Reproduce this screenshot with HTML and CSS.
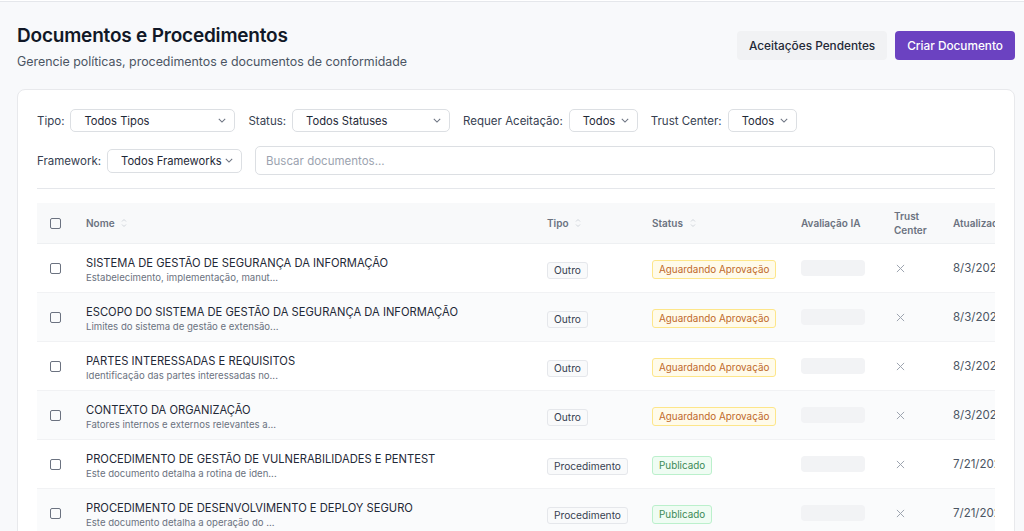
FILE: index.html
```html
<!DOCTYPE html>
<html lang="pt-BR">
<head>
    <meta charset="UTF-8">
    <meta name="viewport" content="width=device-width, initial-scale=1.0">
    <title>Documentos e Procedimentos</title>
    <link rel="stylesheet" href="styles.css">
</head>
<body>
    <div class="topline"></div>

    <div class="page">
        <div class="page-header">
            <div>
                <h1>Documentos e Procedimentos</h1>
                <p class="subtitle">Gerencie políticas, procedimentos e documentos de conformidade</p>
            </div>
            <div class="header-actions">
                <button class="btn btn-light">Aceitações Pendentes</button>
                <button class="btn btn-primary">Criar Documento</button>
            </div>
        </div>

        <div class="card">
            <div class="filters">
                <div class="filter-row">
                    <label>Tipo:</label>
                    <div class="select w-tipo"><span>Todos Tipos</span><svg viewBox="0 0 10 6"><path d="M1 1l4 4 4-4"/></svg></div>
                    <label>Status:</label>
                    <div class="select w-status"><span>Todos Statuses</span><svg viewBox="0 0 10 6"><path d="M1 1l4 4 4-4"/></svg></div>
                    <label>Requer Aceitação:</label>
                    <div class="select w-small"><span>Todos</span><svg viewBox="0 0 10 6"><path d="M1 1l4 4 4-4"/></svg></div>
                    <label>Trust Center:</label>
                    <div class="select w-small"><span>Todos</span><svg viewBox="0 0 10 6"><path d="M1 1l4 4 4-4"/></svg></div>
                </div>
                <div class="filter-row">
                    <label>Framework:</label>
                    <div class="select w-framework"><span>Todos Frameworks</span><svg viewBox="0 0 10 6"><path d="M1 1l4 4 4-4"/></svg></div>
                    <input type="text" class="search" placeholder="Buscar documentos...">
                </div>
            </div>

            <div class="table-wrap">
                <table class="doc-table">
                    <colgroup>
                        <col style="width:37px">
                        <col style="width:461px">
                        <col style="width:105px">
                        <col style="width:149px">
                        <col style="width:93px">
                        <col style="width:59px">
                        <col style="width:120px">
                    </colgroup>
                    <thead>
                        <tr>
                            <th class="cb-cell"><span class="checkbox"></span></th>
                            <th>Nome <svg class="sort" viewBox="0 0 6 10"><path d="M1 3.5l2-2 2 2M1 6.5l2 2 2-2"/></svg></th>
                            <th>Tipo <svg class="sort" viewBox="0 0 6 10"><path d="M1 3.5l2-2 2 2M1 6.5l2 2 2-2"/></svg></th>
                            <th>Status <svg class="sort" viewBox="0 0 6 10"><path d="M1 3.5l2-2 2 2M1 6.5l2 2 2-2"/></svg></th>
                            <th>Avaliação IA</th>
                            <th>Trust Center</th>
                            <th>Atualizado em</th>
                        </tr>
                    </thead>
                    <tbody>
                        <tr>
                            <td class="cb-cell"><span class="checkbox"></span></td>
                            <td><div class="doc-text"><div class="doc-name">SISTEMA DE GESTÃO DE SEGURANÇA DA INFORMAÇÃO</div><div class="doc-desc">Estabelecimento, implementação, manut...</div></div></td>
                            <td><span class="tag">Outro</span></td>
                            <td><span class="status pending">Aguardando Aprovação</span></td>
                            <td><span class="ai-placeholder"></span></td>
                            <td><svg class="cross" viewBox="0 0 10 10"><path d="M1 1l8 8M9 1l-8 8"/></svg></td>
                            <td class="date">8/3/2026</td>
                        </tr>
                        <tr>
                            <td class="cb-cell"><span class="checkbox"></span></td>
                            <td><div class="doc-text"><div class="doc-name">ESCOPO DO SISTEMA DE GESTÃO DA SEGURANÇA DA INFORMAÇÃO</div><div class="doc-desc">Limites do sistema de gestão e extensão...</div></div></td>
                            <td><span class="tag">Outro</span></td>
                            <td><span class="status pending">Aguardando Aprovação</span></td>
                            <td><span class="ai-placeholder"></span></td>
                            <td><svg class="cross" viewBox="0 0 10 10"><path d="M1 1l8 8M9 1l-8 8"/></svg></td>
                            <td class="date">8/3/2026</td>
                        </tr>
                        <tr>
                            <td class="cb-cell"><span class="checkbox"></span></td>
                            <td><div class="doc-text"><div class="doc-name">PARTES INTERESSADAS E REQUISITOS</div><div class="doc-desc">Identificação das partes interessadas no...</div></div></td>
                            <td><span class="tag">Outro</span></td>
                            <td><span class="status pending">Aguardando Aprovação</span></td>
                            <td><span class="ai-placeholder"></span></td>
                            <td><svg class="cross" viewBox="0 0 10 10"><path d="M1 1l8 8M9 1l-8 8"/></svg></td>
                            <td class="date">8/3/2026</td>
                        </tr>
                        <tr>
                            <td class="cb-cell"><span class="checkbox"></span></td>
                            <td><div class="doc-text"><div class="doc-name">CONTEXTO DA ORGANIZAÇÃO</div><div class="doc-desc">Fatores internos e externos relevantes a...</div></div></td>
                            <td><span class="tag">Outro</span></td>
                            <td><span class="status pending">Aguardando Aprovação</span></td>
                            <td><span class="ai-placeholder"></span></td>
                            <td><svg class="cross" viewBox="0 0 10 10"><path d="M1 1l8 8M9 1l-8 8"/></svg></td>
                            <td class="date">8/3/2026</td>
                        </tr>
                        <tr>
                            <td class="cb-cell"><span class="checkbox"></span></td>
                            <td><div class="doc-text"><div class="doc-name">PROCEDIMENTO DE GESTÃO DE VULNERABILIDADES E PENTEST</div><div class="doc-desc">Este documento detalha a rotina de iden...</div></div></td>
                            <td><span class="tag">Procedimento</span></td>
                            <td><span class="status published">Publicado</span></td>
                            <td><span class="ai-placeholder"></span></td>
                            <td><svg class="cross" viewBox="0 0 10 10"><path d="M1 1l8 8M9 1l-8 8"/></svg></td>
                            <td class="date">7/21/2025</td>
                        </tr>
                        <tr>
                            <td class="cb-cell"><span class="checkbox"></span></td>
                            <td><div class="doc-text"><div class="doc-name">PROCEDIMENTO DE DESENVOLVIMENTO E DEPLOY SEGURO</div><div class="doc-desc">Este documento detalha a operação do ...</div></div></td>
                            <td><span class="tag">Procedimento</span></td>
                            <td><span class="status published">Publicado</span></td>
                            <td><span class="ai-placeholder"></span></td>
                            <td><svg class="cross" viewBox="0 0 10 10"><path d="M1 1l8 8M9 1l-8 8"/></svg></td>
                            <td class="date">7/21/2025</td>
                        </tr>
                    </tbody>
                </table>
            </div>
        </div>
    </div>
</body>
</html>
```

FILE: styles.css
```css
/* base */
body {
    margin: 0;
    font-family: Inter, 'Noto Sans', sans-serif;
    background-color: #f8f9fb;
    color: #1f2937;
    overflow: hidden;
}
.topline {
    height: 1px;
    background-color: #ffffff;
    border-bottom: 1px solid #e5e7eb;
}
.page {
    padding: 21px 9px 0 17px;
}

/* header */
.page-header {
    display: flex;
    justify-content: space-between;
    align-items: center;
    margin-bottom: 17px;
}
h1 {
    margin: 0;
    font-size: 19px;
    font-weight: 600;
    color: #111827;
    letter-spacing: -0.2px;
    line-height: 26px;
}
.subtitle {
    margin: 3px 0 0;
    font-size: 12.4px;
    color: #4b5563;
    line-height: 20px;
}
.header-actions {
    display: flex;
    gap: 8px;
    margin-top: -4px;
}
.btn {
    font-family: inherit;
    font-size: 11.8px;
    font-weight: 500;
    height: 29px;
    padding: 0 12px;
    border: none;
    border-radius: 4px;
    cursor: pointer;
}
.btn-light {
    background-color: #f1f2f4;
    color: #1f2937;
}
.btn-primary {
    background-color: #6b42c1;
    color: #ffffff;
}

/* card */
.card {
    background-color: #ffffff;
    border: 1px solid #e8e9ec;
    border-radius: 8px;
    padding: 19px 19px 0 19px;
    height: 460px;
}
.filters {
    padding-bottom: 13px;
    border-bottom: 1px solid #e5e7eb;
    margin-bottom: 14px;
}
.filter-row {
    display: flex;
    align-items: center;
    margin-bottom: 14px;
}
.filter-row:last-child {
    margin-bottom: 0;
}
.filter-row label {
    font-size: 11.5px;
    color: #374151;
    margin-right: 6px;
}
.select {
    display: flex;
    align-items: center;
    justify-content: space-between;
    box-sizing: border-box;
    height: 23px;
    padding: 0 8px 0 13px;
    border: 1px solid #dcdfe3;
    border-radius: 5px;
    font-size: 11.2px;
    color: #1f2937;
    margin-right: 13px;
    white-space: nowrap;
}
.select svg {
    width: 8px;
    height: 5px;
    fill: none;
    stroke: #6b7280;
    stroke-width: 1.3;
}
.w-tipo { width: 165px; }
.w-status { width: 158px; }
.w-small { width: 69px; }
.w-framework { width: 135px; height: 24px; }
.search {
    flex: 1;
    height: 29px;
    box-sizing: border-box;
    border: 1px solid #dcdfe3;
    border-radius: 5px;
    padding: 0 10px;
    font-family: inherit;
    font-size: 11.5px;
    color: #1f2937;
}
.search::placeholder {
    color: #9ca3af;
}

/* table */
.table-wrap {
    overflow: hidden;
}
.doc-table {
    table-layout: fixed;
    width: 1024px;
    border-collapse: collapse;
}
.doc-table th {
    background-color: #f8f9fa;
    height: 40px;
    padding: 0 12px;
    text-align: left;
    font-size: 10px;
    font-weight: 600;
    color: #6b7280;
    line-height: 14px;
    border-bottom: 1px solid #eef0f2;
}
.doc-table td {
    height: 48px;
    padding: 0 12px;
    border-bottom: 1px solid #f1f2f4;
    vertical-align: middle;
}
.doc-table tbody tr:nth-child(even) td {
    background-color: #fafbfc;
}
.doc-table .cb-cell {
    padding: 0 0 0 13px;
}
.checkbox {
    display: block;
    width: 9px;
    height: 9px;
    border: 1px solid #6b7280;
    border-radius: 2px;
}
.sort {
    width: 6px;
    height: 10px;
    margin-left: 4px;
    vertical-align: -1px;
    fill: none;
    stroke: #d1d5db;
    stroke-width: 1;
}
.doc-text {
    padding-top: 3px;
}
.doc-name {
    font-size: 11.2px;
    color: #1f2937;
    line-height: 16px;
    white-space: nowrap;
}
.doc-desc {
    font-size: 9.6px;
    color: #6b7280;
    line-height: 14px;
    white-space: nowrap;
}
.tag {
    display: inline-block;
    padding: 0 6px;
    border: 1px solid #e5e7eb;
    background-color: #f9fafb;
    border-radius: 3px;
    font-size: 10.2px;
    line-height: 15px;
    color: #374151;
}
.status {
    display: inline-block;
    padding: 0 6px;
    border-radius: 3px;
    font-size: 9.9px;
    line-height: 17px;
    white-space: nowrap;
}
.pending {
    background-color: #fffbea;
    border: 1px solid #fde68a;
    color: #c0692a;
}
.published {
    background-color: #effcf3;
    border: 1px solid #bbf0cc;
    color: #3b8a57;
}
.ai-placeholder {
    display: block;
    width: 64px;
    height: 16px;
    background-color: #f2f3f5;
    border-radius: 4px;
}
.cross {
    display: block;
    width: 9px;
    height: 9px;
    margin-left: 2px;
    fill: none;
    stroke: #9ca3af;
    stroke-width: 1.1;
}
.date {
    font-size: 11.5px;
    color: #4b5563;
    white-space: nowrap;
}
```
